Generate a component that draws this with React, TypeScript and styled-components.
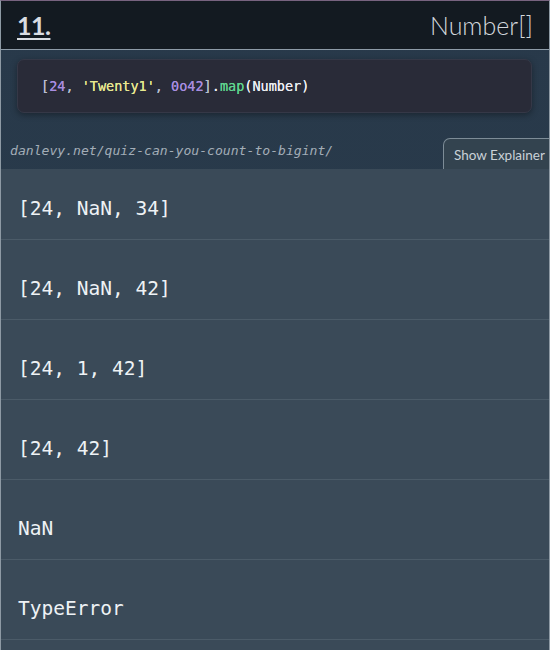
import React from "react";
import styled, { createGlobalStyle } from "styled-components";

const Global = createGlobalStyle`
  html, body { margin: 0; padding: 0; background: #26394a; }
  body { font-family: "Lato", "Open Sans", sans-serif; }
`;

const Frame = styled.div`
  width: 550px;
  height: 650px;
  box-sizing: border-box;
  border-top: 1px solid #77637f;
  border-left: 1px solid #8e9aa4;
  border-right: 1px solid #8e9aa4;
  overflow: hidden;
  display: flex;
  flex-direction: column;
  background: linear-gradient(180deg, #28394a 0%, #2a3c4c 100%);
`;

const Header = styled.header`
  height: 48px;
  flex: none;
  background: #131a21;
  border-bottom: 1px solid #8d9ba7;
  display: flex;
  align-items: center;
  justify-content: space-between;
  padding: 0 16px 0 16px;
`;

const QNum = styled.span`
  font-family: "Lato", sans-serif;
  font-weight: 700;
  font-size: 25px;
  color: #d9dde2;
  text-decoration: underline;
  text-decoration-thickness: 2px;
  text-underline-offset: 3px;
  letter-spacing: -0.5px;
`;

const QType = styled.span`
  font-family: "Lato", sans-serif;
  font-weight: 300;
  font-size: 25px;
  color: #d3d8dd;
`;

const CodeBox = styled.pre`
  flex: none;
  margin: 9px 17px 0 16px;
  height: 54px;
  box-sizing: border-box;
  background: #292b38;
  border: 1px solid #353847;
  border-radius: 7px;
  box-shadow: 0 2px 6px rgba(0, 0, 0, 0.35);
  display: flex;
  align-items: center;
  padding: 0 0 0 23px;
  font-family: "DejaVu Sans Mono", monospace;
  font-size: 13.5px;
  font-weight: 400;
  color: #eceef4;
  text-shadow: 0 0 0.4px currentColor;
`;

const Tok = styled.span<{ $c: string }>`
  color: ${(p) => p.$c};
`;

const UrlBar = styled.div`
  height: 56px;
  flex: none;
  display: flex;
  align-items: flex-end;
  justify-content: space-between;
`;

const Url = styled.span`
  font-family: "DejaVu Sans Mono", monospace;
  font-style: italic;
  font-size: 13.1px;
  color: #a3adb7;
  padding: 0 0 11px 9px;
`;

const ExplainBtn = styled.button`
  height: 31px;
  width: 110px;
  margin-right: -4px;
  box-sizing: border-box;
  background: #33434f;
  border: 1px solid #7d8c97;
  border-bottom: none;
  border-radius: 7px 0 0 0;
  color: #c9d1d7;
  font-family: "Lato", sans-serif;
  font-size: 13.5px;
  text-align: left;
  padding: 2px 0 0 10px;
  cursor: pointer;
`;

const Answers = styled.ol`
  list-style: none;
  margin: 0;
  padding: 0;
  background: #3a4a58;
  flex: 1;
`;

const Answer = styled.li<{ $first?: boolean }>`
  height: ${(p) => (p.$first ? 71 : 80)}px;
  box-sizing: border-box;
  border-bottom: 1px solid #4b5b68;
  padding: ${(p) => (p.$first ? 28 : 37)}px 0 0 17px;
  font-family: "DejaVu Sans Mono", monospace;
  font-size: 19.5px;
  line-height: 24px;
  color: #eef2f5;
`;

const answers = ["[24, NaN, 34]", "[24, NaN, 42]", "[24, 1, 42]", "[24, 42]", "NaN", "TypeError", ""];

export default function App() {
  return (
    <>
      <Global />
      <Frame>
        <Header>
          <QNum>11.</QNum>
          <QType>Number[]</QType>
        </Header>
        <CodeBox>
          <Tok $c="#b6bdd0">[</Tok>
          <Tok $c="#a88de0">24</Tok>
          <Tok $c="#b6bdd0">, </Tok>
          <Tok $c="#e7e88f">'Twenty1'</Tok>
          <Tok $c="#b6bdd0">, </Tok>
          <Tok $c="#a88de0">0o42</Tok>
          <Tok $c="#b6bdd0">]</Tok>
          <Tok $c="#eceef4">.</Tok>
          <Tok $c="#5fd48e">map</Tok>
          <Tok $c="#eceef4">(Number)</Tok>
        </CodeBox>
        <UrlBar>
          <Url>danlevy.net/quiz-can-you-count-to-bigint/</Url>
          <ExplainBtn>Show Explainer</ExplainBtn>
        </UrlBar>
        <Answers>
          {answers.map((a, i) => (
            <Answer key={i} $first={i === 0}>
              {a}
            </Answer>
          ))}
        </Answers>
      </Frame>
    </>
  );
}
